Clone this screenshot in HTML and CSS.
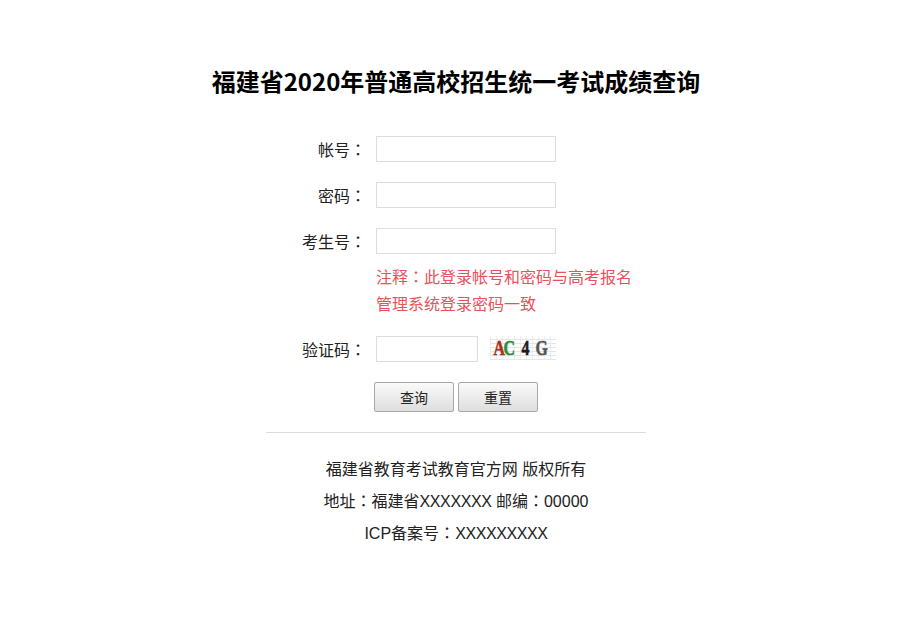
FILE: index.html
```html
<!DOCTYPE html>
<html lang="zh">
<head>
    <meta charset="UTF-8">
    <meta name="viewport" content="width=device-width, initial-scale=1.0">
    <title>福建省2020年普通高校招生统一考试成绩查询</title>
    <link rel="stylesheet" href="styles.css">
</head>
<body>

    <div class="container">
        <h1>福建省2020年普通高校招生统一考试成绩查询</h1>

        <form class="login-form">
            <label for="account">帐号<span class="colon" lang="zh-TW">：</span></label>
            <input type="text" id="account">

            <label for="password">密码<span class="colon" lang="zh-TW">：</span></label>
            <input type="password" id="password">

            <label for="examNo">考生号<span class="colon" lang="zh-TW">：</span></label>
            <input type="text" id="examNo">

            <p class="note">注释<span class="colon" lang="zh-TW">：</span>此登录帐号和密码与高考报名<br>管理系统登录密码一致</p>

            <label for="captcha">验证码<span class="colon" lang="zh-TW">：</span></label>
            <div class="captcha-row">
                <input type="text" id="captcha" class="captcha-input">
                <div class="captcha-img">
                    <span class="glyph red">A</span><span class="glyph green">C</span><span class="glyph black gap">4</span><span class="glyph grey gap-small">G</span>
                </div>
            </div>

            <div class="buttons">
                <button type="button">查询</button>
                <button type="reset">重置</button>
            </div>
        </form>

        <div class="footer">
            <p>福建省教育考试教育官方网 版权所有</p>
            <p>地址<span class="colon" lang="zh-TW">：</span>福建省<span class="xs">XXXXXXX</span> 邮编<span class="colon" lang="zh-TW">：</span>00000</p>
            <p>ICP备案号<span class="colon" lang="zh-TW">：</span><span class="xs">XXXXXXXXX</span></p>
        </div>
    </div>

</body>
</html>
```

FILE: styles.css
```css
* {
    box-sizing: border-box;
}

body {
    margin: 0;
    background: #fff;
    color: #222;
    font-family: "Noto Sans CJK SC", "Liberation Sans", sans-serif;
    font-size: 16px;
}

.container {
    width: 520px;
    margin-left: 196px;
    padding-top: 63px;
}

h1 {
    margin: 0 0 38px;
    font-size: 24px;
    line-height: 35px;
    font-weight: bold;
    color: #000;
    text-align: center;
    white-space: nowrap;
}

/* 全角冒号居中 */
.colon {
    font-family: "Noto Sans CJK TC", sans-serif;
    line-height: 1;
}

.login-form {
    display: grid;
    grid-template-columns: 100px 1fr;
    column-gap: 10px;
    row-gap: 20px;
    width: 380px;
    margin: 0 auto;
}

.login-form label {
    line-height: 26px;
    text-align: right;
    white-space: nowrap;
}

input {
    display: block;
    width: 180px;
    height: 26px;
    border: 1px solid #ddd;
    background: #fff;
    outline: none;
}

.note {
    grid-column: 2;
    margin: -11px 0 -1px;
    width: 260px;
    color: #e8525a;
    line-height: 27px;
}

.captcha-row {
    display: flex;
    gap: 12px;
}

.captcha-input {
    width: 102px;
}

.captcha-img {
    width: 66px;
    height: 24px;
    padding-left: 2px;
    font-family: "Liberation Serif", serif;
    font-size: 22px;
    line-height: 23px;
    font-weight: bold;
    white-space: nowrap;
    background-color: #fdfdfd;
    background-image:
        repeating-linear-gradient(0deg, #e6e6e6 0, #e6e6e6 1px, transparent 1px, transparent 4px),
        repeating-linear-gradient(90deg, #eee 0, #eee 1px, transparent 1px, transparent 6px);
}

.glyph {
    display: inline-block;
    width: 10px;
    text-align: center;
    transform: scaleX(0.72);
    -webkit-text-stroke: 0.6px currentColor;
}

.red { color: #a5301f; }
.green { color: #2f8a35; }
.black { color: #1c1c1c; }
.grey { color: #555; }
.gap { margin-left: 8px; }
.gap-small { margin-left: 4px; }

.buttons {
    grid-column: 2;
    display: flex;
    gap: 4px;
    margin-left: -2px;
}

button {
    width: 80px;
    height: 30px;
    padding: 0;
    border: 1px solid #a8a8a8;
    border-radius: 2px;
    background: linear-gradient(#fafafa, #dedede);
    color: #222;
    font-family: inherit;
    font-size: 14px;
}

.footer {
    width: 380px;
    margin: 20px auto 0;
    padding-top: 21px;
    border-top: 1px solid #ddd;
    text-align: center;
    white-space: nowrap;
    font-family: "Liberation Sans", "Noto Sans CJK SC", sans-serif;
}

.footer p {
    margin: 0;
    line-height: 32px;
}

.xs {
    letter-spacing: -0.4px;
}
```
